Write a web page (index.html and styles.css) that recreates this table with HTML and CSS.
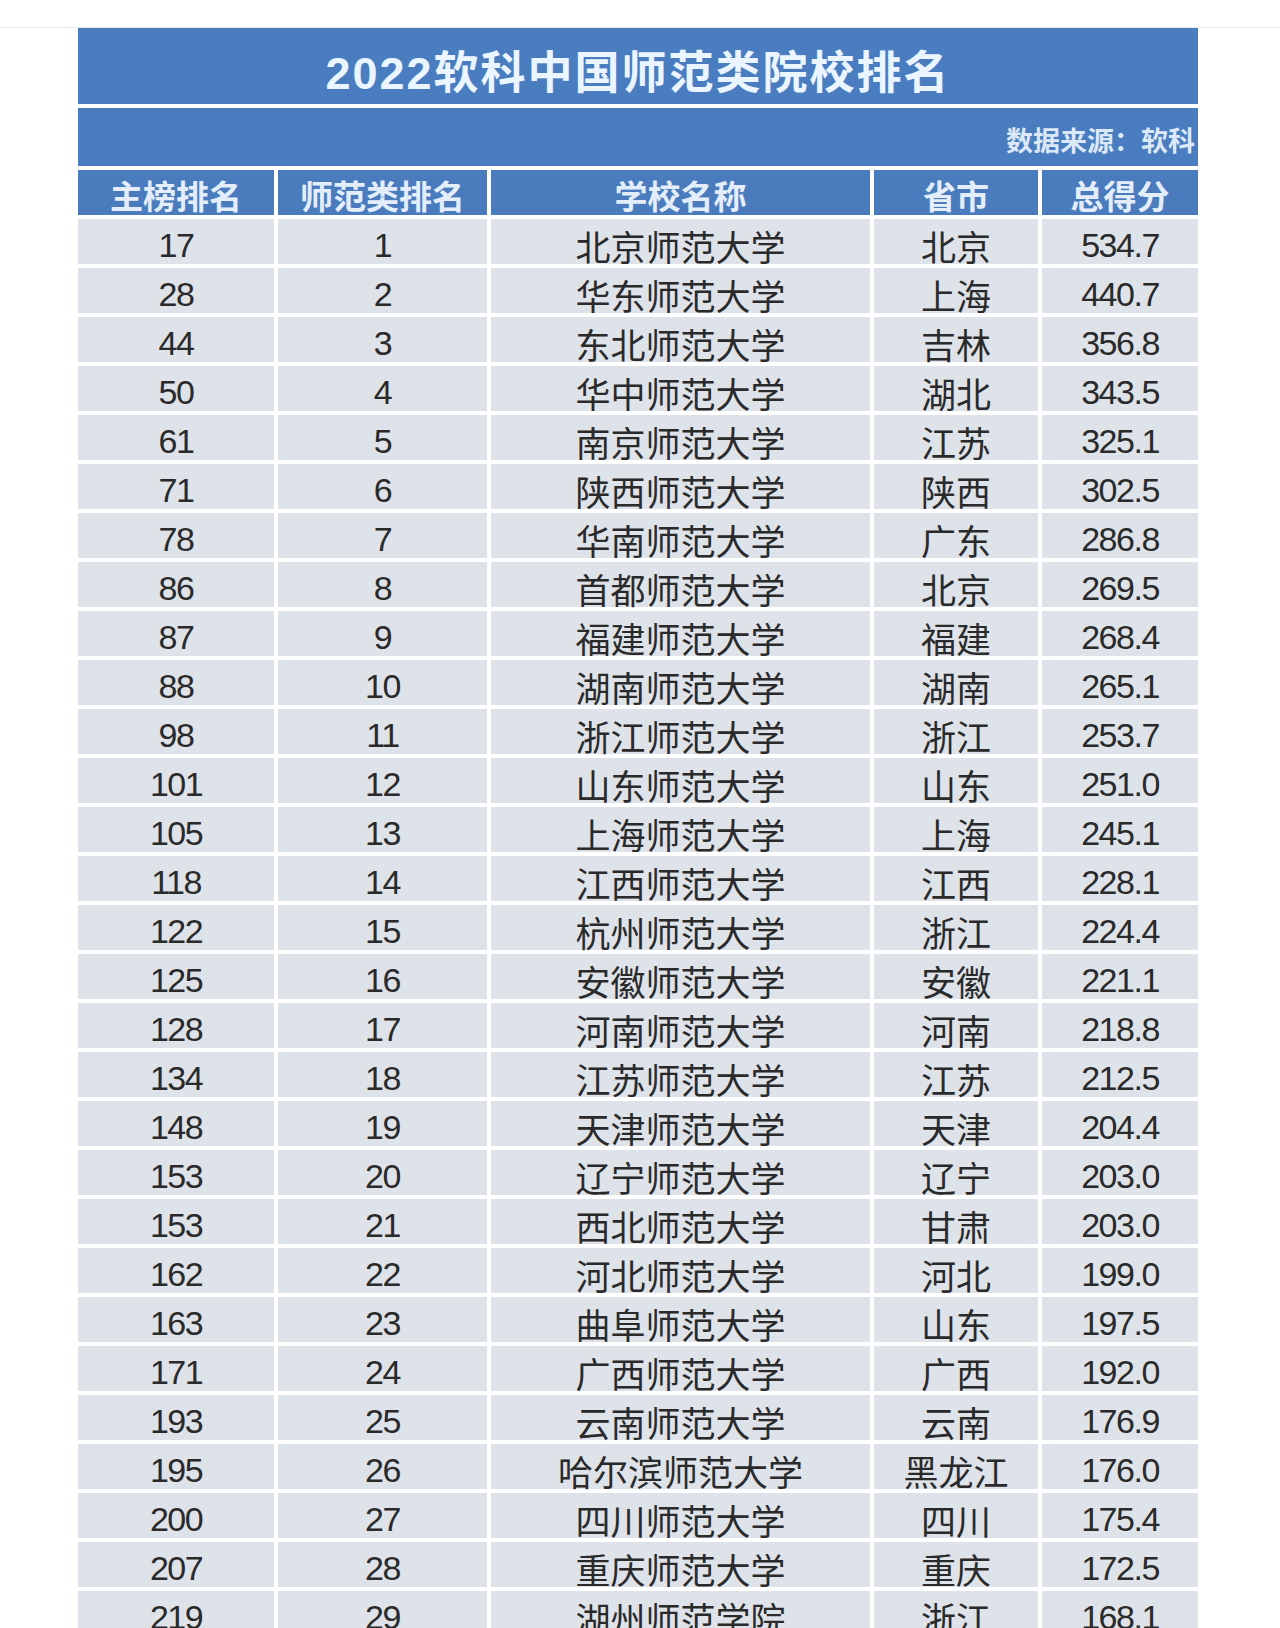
FILE: index.html
```html
<!DOCTYPE html>
<html lang="zh-CN">
<head>
<meta charset="utf-8">
<title>2022软科中国师范类院校排名</title>
<link rel="stylesheet" href="styles.css">
</head>
<body>
<div class="page">
  <div class="sheet">
    <div class="title">2022软科中国师范类院校排名</div>
    <div class="source">数据来源：软科</div>
    <div class="grid">
      <div class="hd">主榜排名</div><div class="hd">师范类排名</div><div class="hd">学校名称</div><div class="hd">省市</div><div class="hd">总得分</div>
      <div class="num">17</div><div class="num">1</div><div class="cn">北京师范大学</div><div class="cn">北京</div><div class="num">534.7</div>
      <div class="num">28</div><div class="num">2</div><div class="cn">华东师范大学</div><div class="cn">上海</div><div class="num">440.7</div>
      <div class="num">44</div><div class="num">3</div><div class="cn">东北师范大学</div><div class="cn">吉林</div><div class="num">356.8</div>
      <div class="num">50</div><div class="num">4</div><div class="cn">华中师范大学</div><div class="cn">湖北</div><div class="num">343.5</div>
      <div class="num">61</div><div class="num">5</div><div class="cn">南京师范大学</div><div class="cn">江苏</div><div class="num">325.1</div>
      <div class="num">71</div><div class="num">6</div><div class="cn">陕西师范大学</div><div class="cn">陕西</div><div class="num">302.5</div>
      <div class="num">78</div><div class="num">7</div><div class="cn">华南师范大学</div><div class="cn">广东</div><div class="num">286.8</div>
      <div class="num">86</div><div class="num">8</div><div class="cn">首都师范大学</div><div class="cn">北京</div><div class="num">269.5</div>
      <div class="num">87</div><div class="num">9</div><div class="cn">福建师范大学</div><div class="cn">福建</div><div class="num">268.4</div>
      <div class="num">88</div><div class="num">10</div><div class="cn">湖南师范大学</div><div class="cn">湖南</div><div class="num">265.1</div>
      <div class="num">98</div><div class="num">11</div><div class="cn">浙江师范大学</div><div class="cn">浙江</div><div class="num">253.7</div>
      <div class="num">101</div><div class="num">12</div><div class="cn">山东师范大学</div><div class="cn">山东</div><div class="num">251.0</div>
      <div class="num">105</div><div class="num">13</div><div class="cn">上海师范大学</div><div class="cn">上海</div><div class="num">245.1</div>
      <div class="num">118</div><div class="num">14</div><div class="cn">江西师范大学</div><div class="cn">江西</div><div class="num">228.1</div>
      <div class="num">122</div><div class="num">15</div><div class="cn">杭州师范大学</div><div class="cn">浙江</div><div class="num">224.4</div>
      <div class="num">125</div><div class="num">16</div><div class="cn">安徽师范大学</div><div class="cn">安徽</div><div class="num">221.1</div>
      <div class="num">128</div><div class="num">17</div><div class="cn">河南师范大学</div><div class="cn">河南</div><div class="num">218.8</div>
      <div class="num">134</div><div class="num">18</div><div class="cn">江苏师范大学</div><div class="cn">江苏</div><div class="num">212.5</div>
      <div class="num">148</div><div class="num">19</div><div class="cn">天津师范大学</div><div class="cn">天津</div><div class="num">204.4</div>
      <div class="num">153</div><div class="num">20</div><div class="cn">辽宁师范大学</div><div class="cn">辽宁</div><div class="num">203.0</div>
      <div class="num">153</div><div class="num">21</div><div class="cn">西北师范大学</div><div class="cn">甘肃</div><div class="num">203.0</div>
      <div class="num">162</div><div class="num">22</div><div class="cn">河北师范大学</div><div class="cn">河北</div><div class="num">199.0</div>
      <div class="num">163</div><div class="num">23</div><div class="cn">曲阜师范大学</div><div class="cn">山东</div><div class="num">197.5</div>
      <div class="num">171</div><div class="num">24</div><div class="cn">广西师范大学</div><div class="cn">广西</div><div class="num">192.0</div>
      <div class="num">193</div><div class="num">25</div><div class="cn">云南师范大学</div><div class="cn">云南</div><div class="num">176.9</div>
      <div class="num">195</div><div class="num">26</div><div class="cn">哈尔滨师范大学</div><div class="cn">黑龙江</div><div class="num">176.0</div>
      <div class="num">200</div><div class="num">27</div><div class="cn">四川师范大学</div><div class="cn">四川</div><div class="num">175.4</div>
      <div class="num">207</div><div class="num">28</div><div class="cn">重庆师范大学</div><div class="cn">重庆</div><div class="num">172.5</div>
      <div class="num">219</div><div class="num">29</div><div class="cn">湖州师范学院</div><div class="cn">浙江</div><div class="num">168.1</div>
    </div>
  </div>
</div>
</body>
</html>
```

FILE: styles.css
```css
html, body {
  margin: 0;
  padding: 0;
  background: #ffffff;
}

body {
  font-family: "Liberation Sans", "Noto Sans CJK SC", sans-serif;
  color: #2b2b2b;
}

.page {
  margin-top: 27px;
  border-top: 1px solid #ececec;
  height: 1600px;
  overflow: hidden;
}

.sheet {
  width: 1120px;
  margin-left: 78px;
  margin-top: -1px;
  padding-top: 1px;
  display: flex;
  flex-direction: column;
  gap: 4px;
}

.title {
  height: 76px;
  background: #4a7dbf;
  color: #eaf5ff;
  font-size: 45px;
  font-weight: bold;
  letter-spacing: 2px;
  display: flex;
  align-items: center;
  justify-content: center;
  padding-top: 6px;
  box-sizing: border-box;
}

.source {
  height: 58px;
  background: #4a7dbf;
  color: #dbe8f6;
  font-size: 27px;
  font-weight: bold;
  display: flex;
  align-items: center;
  justify-content: flex-end;
  padding-right: 3px;
  padding-top: 4px;
  box-sizing: border-box;
}

.grid {
  display: grid;
  grid-template-columns: 196px 209px 379px 164px 156px;
  grid-auto-rows: 45px;
  column-gap: 4px;
  row-gap: 4px;
}

.grid > div {
  display: flex;
  align-items: center;
  justify-content: center;
  white-space: nowrap;
  box-sizing: border-box;
}

.hd {
  background: #4a7bbd;
  color: #e3eefa;
  font-size: 33px;
  font-weight: bold;
  padding-top: 4px;
}

.num,
.cn {
  background: #dee2e9;
  color: #2a2a2a;
  padding-top: 8px;
}

.num {
  font-size: 34px;
  letter-spacing: -1.5px;
}

.cn {
  font-size: 35px;
  font-family: "Noto Sans CJK SC", sans-serif;
  letter-spacing: 0px;
}
```
